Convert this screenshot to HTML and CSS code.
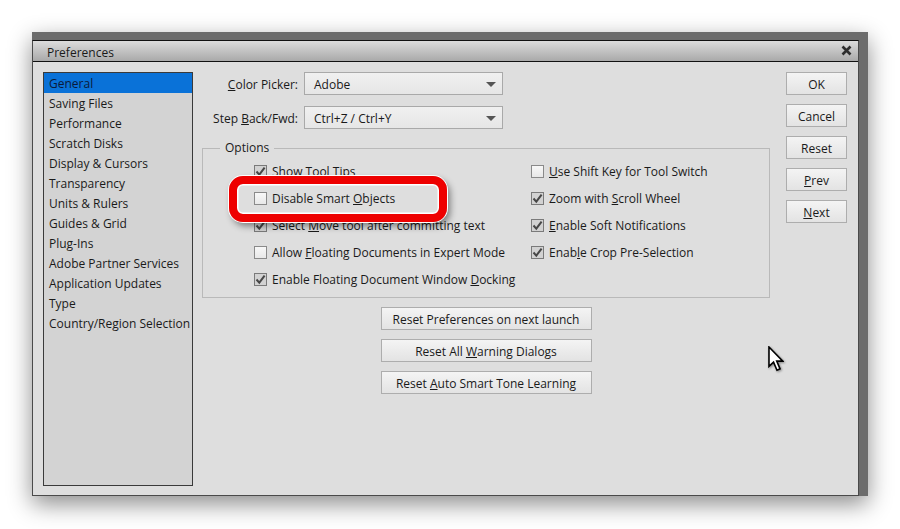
FILE: index.html
```html
<!DOCTYPE html>
<html lang="en">
<head>
    <meta charset="UTF-8">
    <meta name="viewport" content="width=device-width, initial-scale=1.0">
    <title>Preferences</title>
    <link rel="stylesheet" href="styles.css">
</head>
<body>
    <div class="frame">
        <div class="dialog">
            <div class="titlebar">
                <span class="title">Preferences</span>
                <svg class="close" width="11" height="11" viewBox="0 0 11 11">
                    <path d="M1.5 1.5 L9.5 9.5 M9.5 1.5 L1.5 9.5" stroke="#2e2e2e" stroke-width="2.6" fill="none"/>
                </svg>
            </div>

            <div class="dialog-body">
                <!-- Category list -->
                <ul class="nav">
                    <li class="selected">General</li>
                    <li>Saving Files</li>
                    <li>Performance</li>
                    <li>Scratch Disks</li>
                    <li>Display &amp; Cursors</li>
                    <li>Transparency</li>
                    <li>Units &amp; Rulers</li>
                    <li>Guides &amp; Grid</li>
                    <li>Plug-Ins</li>
                    <li>Adobe Partner Services</li>
                    <li>Application Updates</li>
                    <li>Type</li>
                    <li>Country/Region Selection</li>
                </ul>

                <div class="main">
                    <div class="form-row">
                        <span class="label"><u>C</u>olor Picker:</span>
                        <div class="select">Adobe<span class="arrow"></span></div>
                    </div>
                    <div class="form-row second">
                        <span class="label">Step <u>B</u>ack/Fwd:</span>
                        <div class="select">Ctrl+Z / Ctrl+Y<span class="arrow"></span></div>
                    </div>

                    <fieldset class="options">
                        <legend>Options</legend>
                        <div class="opt-grid">
                            <div class="opt-col left">
                                <div class="opt"><span class="cb checked"></span><span>Show Tool Tips</span></div>
                                <div class="opt"><span class="cb"></span><span>Disable Smart <u>O</u>bjects</span></div>
                                <div class="opt"><span class="cb checked"></span><span>Select <u>M</u>ove tool after committing text</span></div>
                                <div class="opt"><span class="cb"></span><span>Allow <u>F</u>loating Documents in Expert Mode</span></div>
                                <div class="opt"><span class="cb checked"></span><span>Enable Floating Document Window <u>D</u>ocking</span></div>
                            </div>
                            <div class="opt-col">
                                <div class="opt"><span class="cb"></span><span><u>U</u>se Shift Key for Tool Switch</span></div>
                                <div class="opt"><span class="cb checked"></span><span>Zoom with <u>S</u>croll Wheel</span></div>
                                <div class="opt"><span class="cb checked"></span><span><u>E</u>nable Soft Notifications</span></div>
                                <div class="opt"><span class="cb checked"></span><span>Enab<u>l</u>e Crop Pre-Selection</span></div>
                            </div>
                            <!-- Red callout around the option -->
                            <div class="highlight"></div>
                        </div>
                    </fieldset>

                    <div class="reset-buttons">
                        <button class="btn wide">Reset Preferences on next launch</button>
                        <button class="btn wide">Reset All <u>W</u>arning Dialogs</button>
                        <button class="btn wide">Reset <u>A</u>uto Smart Tone Learning</button>
                    </div>
                </div>

                <div class="side-buttons">
                    <button class="btn">OK</button>
                    <button class="btn">Cancel</button>
                    <button class="btn">Reset</button>
                    <button class="btn"><u>P</u>rev</button>
                    <button class="btn"><u>N</u>ext</button>
                </div>
            </div>
        </div>
    </div>

    <!-- Mouse pointer -->
    <svg class="cursor" width="16" height="26" viewBox="0 0 13 21">
        <path d="M0.8 0.8 L0.8 16.5 L4.5 13 L7.3 19.6 L9.8 18.5 L7.1 12.2 L12 12.2 Z" fill="#fff" stroke="#000" stroke-width="1.3" stroke-linejoin="miter"/>
    </svg>
</body>
</html>
```

FILE: styles.css
```css
body {
    margin: 0;
    background: #ffffff;
    font-family: "Open Sans", "Noto Sans", sans-serif;
    font-size: 12px;
    color: #1a1a1a;
    position: relative;
    height: 529px;
    overflow: hidden;
}

u {
    text-decoration-thickness: 1px;
    text-underline-offset: 1px;
}

.frame {
    position: relative;
    margin: 32px 0 0 32px;
    width: 836px;
    height: 464px;
    box-sizing: border-box;
    padding: 8px 9px 0 0;
    background: #6c6c6c;
    box-shadow: 0 8px 22px rgba(0, 0, 0, 0.45);
}

.dialog {
    height: 100%;
    box-sizing: border-box;
    background: #dedede;
    border: 1px solid #4a4a4a;
    border-top-color: #111;
    display: flex;
    flex-direction: column;
}

.titlebar {
    height: 20px;
    border-bottom: 1px solid #111;
    background: linear-gradient(#dcdcdc, #a9a9a9);
    display: flex;
    align-items: center;
    justify-content: space-between;
    padding: 0 6px 0 14px;
}

.title {
    color: #1a1a1a;
    padding-top: 2px;
}

.close {
    display: block;
    margin-top: -1px;
}

.dialog-body {
    flex: 1;
    display: flex;
    padding: 10px 11px 9px 10px;
}

/* Category list */
.nav {
    list-style: none;
    margin: 0;
    padding: 1px 0 0 0;
    width: 148px;
    background: #d3d3d3;
    border: 1px solid #3a3a3a;
}

.nav li {
    height: 20px;
    line-height: 21px;
    padding-left: 5px;
    white-space: nowrap;
}

.nav li.selected {
    background: #0a72d8;
    color: #0b1a3a;
    margin-top: -1px;
    height: 19px;
    padding-top: 1px;
    line-height: 20px;
}

/* Main column */
.main {
    width: 568px;
    margin-left: 9px;
    display: flex;
    flex-direction: column;
}

.form-row {
    display: flex;
    align-items: center;
    gap: 6px;
}

.form-row.second {
    margin-top: 11px;
}

.label {
    width: 96px;
    text-align: right;
    white-space: nowrap;
    padding-top: 1px;
}

.select {
    position: relative;
    width: 199px;
    height: 23px;
    box-sizing: border-box;
    border: 1px solid #a9a9a9;
    background: linear-gradient(#f0f0f0, #e6e6e6);
    padding-left: 9px;
    line-height: 23px;
}

.arrow {
    position: absolute;
    right: 6px;
    top: 9px;
    width: 0;
    height: 0;
    border-left: 5px solid transparent;
    border-right: 5px solid transparent;
    border-top: 5px solid #555;
}

/* Options group */
.options {
    margin: 10px 0 0 0;
    padding: 1px 0 4px 17px;
    border: 1px solid #b9b9b9;
    min-width: 0;
}

.options legend {
    padding: 0 5px;
    line-height: 18px;
}

.opt-grid {
    position: relative;
    display: flex;
    margin-left: 34px;
}

.opt-col.left {
    width: 277px;
}

.opt {
    height: 27px;
    display: flex;
    align-items: center;
    gap: 5px;
    white-space: nowrap;
}

.cb {
    width: 13px;
    height: 13px;
    box-sizing: border-box;
    border: 1px solid #8a8a8a;
    background: linear-gradient(#f8f8f8, #e8e8e8);
    flex-shrink: 0;
}

.cb.checked {
    border-color: #7a7a7a;
    background: #d2d2d2 url("data:image/svg+xml,%3Csvg xmlns='http://www.w3.org/2000/svg' width='11' height='11' viewBox='0 0 11 11'%3E%3Cpath d='M1.5 5.5 L4.3 8.6 L9.6 1.6' stroke='%23474747' stroke-width='2' fill='none'/%3E%3C/svg%3E") center / 11px 11px no-repeat;
}

.highlight {
    position: absolute;
    left: -25px;
    top: 18px;
    width: 218px;
    height: 46px;
    box-sizing: border-box;
    border: 8px solid #ee0000;
    border-radius: 14px;
    box-shadow: inset 0 0 0 1.5px #ffffff, 0 0 0 1px #ffffff, 3px 4px 7px rgba(0, 0, 0, 0.45);
    pointer-events: none;
}

/* Buttons */
.btn {
    font-family: inherit;
    font-size: 12px;
    color: #1a1a1a;
    height: 23px;
    padding: 1px 0 0 0;
    border: 1px solid #adadad;
    background: linear-gradient(#f4f4f4, #e3e3e3);
    cursor: pointer;
}

.reset-buttons {
    display: flex;
    flex-direction: column;
    align-items: center;
    gap: 9px;
    margin-top: 9px;
}

.btn.wide {
    width: 211px;
}

.side-buttons {
    margin-left: 16px;
    width: 61px;
    display: flex;
    flex-direction: column;
    gap: 9px;
}

.cursor {
    position: absolute;
    left: 768px;
    top: 346px;
    filter: drop-shadow(1px 1px 1px rgba(0, 0, 0, 0.4));
}
```
